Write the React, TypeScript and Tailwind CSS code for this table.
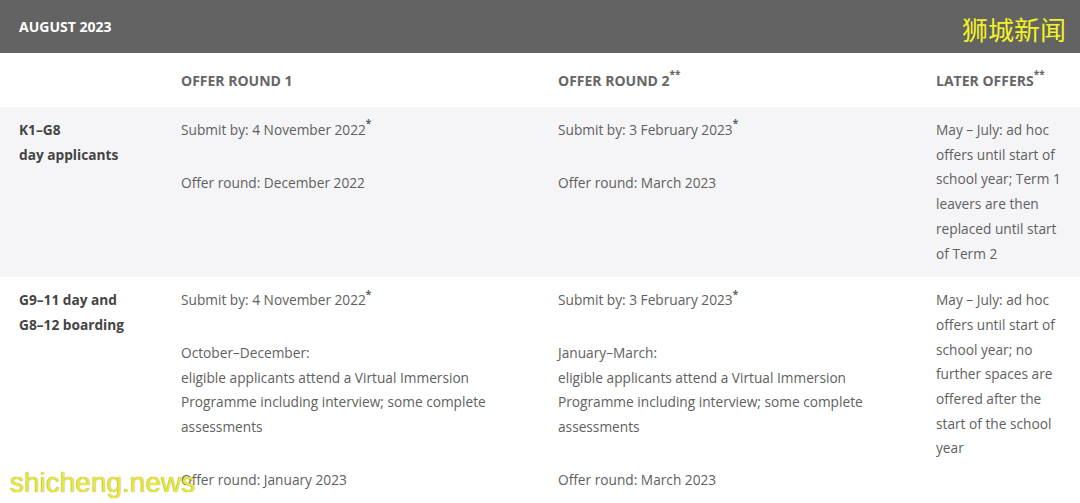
const font = { fontFamily: '"Open Sans", "Noto Sans", sans-serif' };

function Sup({ children }: { children: string }) {
  return <sup className="relative -top-[2px] align-super text-[10px] font-bold">{children}</sup>;
}

function Cell({ paras }: { paras: React.ReactNode[] }) {
  return (
    <div className="w-[320px]">
      {paras.map((p, i) => (
        <p key={i} className={i < paras.length - 1 ? "mb-[28px]" : ""}>
          {p}
        </p>
      ))}
    </div>
  );
}

export default function App() {
  return (
    <div className="relative h-[503px] w-[1080px] overflow-hidden bg-white" style={font}>
      <div className="flex h-[53px] items-center bg-[#636363] pl-[19px]">
        <span className="text-[14px] font-bold text-white">AUGUST 2023</span>
      </div>

      <div className="grid h-[54px] grid-cols-[181px_377px_378px_1fr] items-center text-[14px] font-bold text-[#666]">
        <div />
        <div>OFFER ROUND 1</div>
        <div>
          OFFER ROUND 2<Sup>**</Sup>
        </div>
        <div>
          LATER OFFERS<Sup>**</Sup>
        </div>
      </div>

      <div className="grid grid-cols-[181px_377px_378px_1fr] bg-[#f5f5f7] pb-[11px] pt-[11px] text-[13.7px] leading-[24.7px] text-[#606060]">
        <div className="pl-[19px] font-bold text-[#444]">
          K1–G8
          <br />
          day applicants
        </div>
        <Cell
          paras={[
            <>
              Submit by: 4 November 2022<Sup>*</Sup>
            </>,
            "Offer round: December 2022",
          ]}
        />
        <Cell
          paras={[
            <>
              Submit by: 3 February 2023<Sup>*</Sup>
            </>,
            "Offer round: March 2023",
          ]}
        />
        <div className="w-[130px]">
          May – July: ad hoc offers until start of school year; Term 1 leavers are then replaced until start of Term 2
        </div>
      </div>

      <div className="grid grid-cols-[181px_377px_378px_1fr] pt-[11px] text-[13.7px] leading-[24.7px] text-[#606060]">
        <div className="pl-[19px] font-bold text-[#444]">
          G9–11 day and
          <br />
          G8–12 boarding
        </div>
        <Cell
          paras={[
            <>
              Submit by: 4 November 2022<Sup>*</Sup>
            </>,
            <>
              October–December:
              <br />
              eligible applicants attend a Virtual Immersion Programme including interview; some complete
              assessments
            </>,
            "Offer round: January 2023",
          ]}
        />
        <Cell
          paras={[
            <>
              Submit by: 3 February 2023<Sup>*</Sup>
            </>,
            <>
              January–March:
              <br />
              eligible applicants attend a Virtual Immersion Programme including interview; some complete
              assessments
            </>,
            "Offer round: March 2023",
          ]}
        />
        <div className="w-[130px]">
          May – July: ad hoc offers until start of school year; no further spaces are offered after the start of the
          school year
        </div>
      </div>

      <div
        className="absolute right-[14px] top-[16px] text-[26px] leading-none text-[#f2f224]"
        style={{ fontFamily: '"Noto Sans CJK SC", sans-serif' }}
      >
        狮城新闻
      </div>
      <div
        className="absolute bottom-[6px] left-[10px] text-[28px] leading-none text-[#eaea2a]"
        style={{ fontFamily: '"Liberation Sans", sans-serif', textShadow: "0 0 1px #777" }}
      >
        shicheng.news
      </div>
    </div>
  );
}
